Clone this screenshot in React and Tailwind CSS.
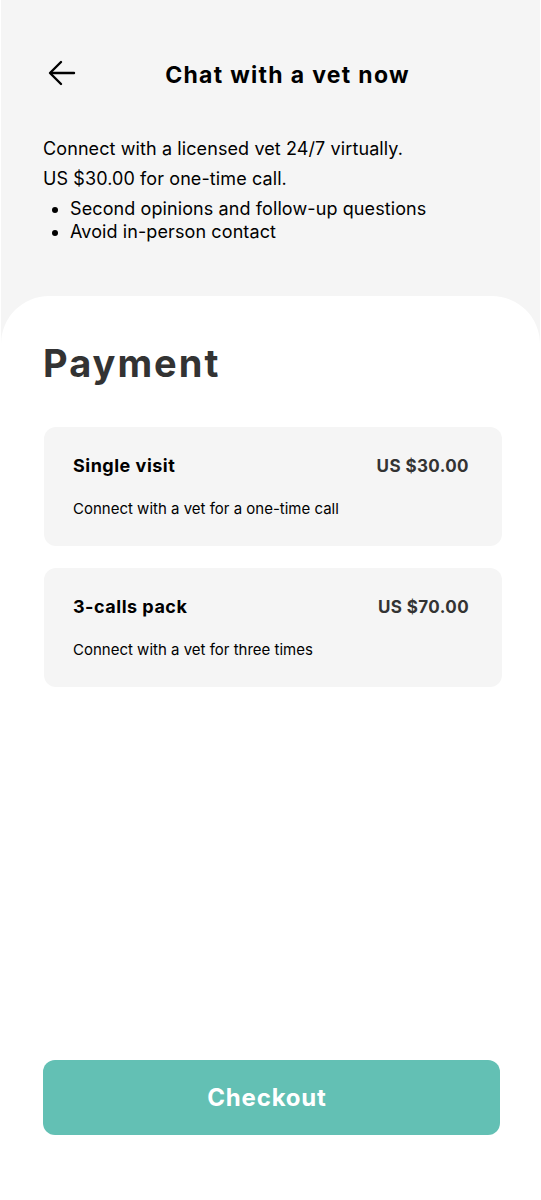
import React from "react";

const head = { fontFamily: "Inter, 'Noto Sans', sans-serif" };
const body = { fontFamily: "Inter, 'Noto Sans', sans-serif" };

function Card({ title, price, desc }) {
  return (
    <div className="rounded-[12px] bg-[#f5f5f5] pl-[29px] pr-[33px] pt-[28px] pb-[27px]">
      <div className="flex items-center justify-between">
        <span style={head} className="text-[18px] font-bold leading-[22px] text-black tracking-[0.5px]">{title}</span>
        <span style={head} className="text-[17px] font-bold leading-[22px] text-[#333333] tracking-[0.4px]">{price}</span>
      </div>
      <p style={body} className="mt-[22px] text-[15px] leading-[20px] text-black">{desc}</p>
    </div>
  );
}

export default function App() {
  return (
    <div className="w-[541px] h-[1200px] bg-white px-[1px] flex flex-col">
      <div className="bg-[#f5f5f5] flex flex-col">
        <div className="relative flex items-center justify-center h-[50px] mt-[50px]">
          <button className="absolute left-[46px] top-[9px]">
            <svg width="30" height="28" viewBox="0 0 30 28" fill="none" stroke="black" strokeWidth="2.4" strokeLinecap="round" strokeLinejoin="round">
              <path d="M27 14H4" />
              <path d="M14 3L3 14L14 25" />
            </svg>
          </button>
          <h1 style={head} className="ml-[34px] text-[23px] font-bold text-black tracking-[1.3px]">Chat with a vet now</h1>
        </div>
        <div style={body} className="px-[42px] pt-[34px] pb-[100px] text-[18px] tracking-[0.1px] text-black">
          <p className="leading-[30px]">Connect with a licensed vet 24/7 virtually.</p>
          <p className="leading-[30px]">US $30.00 for one-time call.</p>
          <ul className="mt-[3px] list-disc pl-[27px] leading-[23px]">
            <li>Second opinions and follow-up questions</li>
            <li>Avoid in-person contact</li>
          </ul>
        </div>
      </div>
      <div className="-mt-[47px] flex-1 bg-white rounded-t-[48px] flex flex-col pl-[42px] pr-[40px]">
        <h2 style={head} className="mt-[44px] text-[38px] font-bold leading-[46px] text-[#333333] tracking-[2px]">Payment</h2>
        <div className="mt-[41px] flex flex-col gap-[22px] ml-[1px] -mr-[2px]">
          <Card title="Single visit" price="US $30.00" desc="Connect with a vet for a one-time call" />
          <Card title="3-calls pack" price="US $70.00" desc="Connect with a vet for three times" />
        </div>
        <div className="flex-1" />
        <button style={head} className="mb-[65px] h-[75px] pr-[9px] rounded-[12px] bg-[#63c0b4] text-white text-[24px] font-bold tracking-[0.8px]">
          Checkout
        </button>
      </div>
    </div>
  );
}
